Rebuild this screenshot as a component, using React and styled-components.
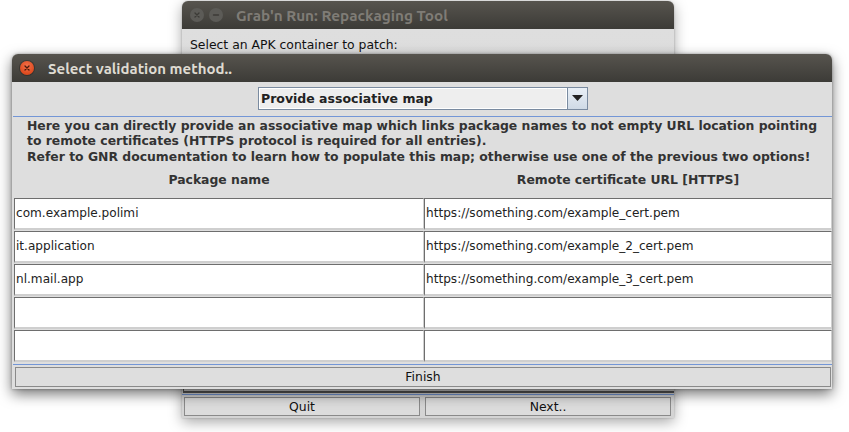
import React from "react";
import styled, { createGlobalStyle } from "styled-components";

const Global = createGlobalStyle`
  html, body { margin: 0; padding: 0; background: #ffffff; }
  body { width: 849px; height: 432px; overflow: hidden; font-family: "DejaVu Sans", sans-serif; }
`;

const Desktop = styled.div`
  position: relative;
  width: 849px;
  height: 432px;
  background: #ffffff;
  overflow: hidden;
`;

const Window = styled.div`
  position: absolute;
  left: ${(p) => p.$x}px;
  top: ${(p) => p.$y}px;
  width: ${(p) => p.$w}px;
  height: ${(p) => p.$h}px;
  display: flex;
  flex-direction: column;
  border-radius: 6px 6px 0 0;
  background: #dedede;
  box-shadow: ${(p) =>
    p.$active
      ? "0 5px 14px rgba(0,0,0,0.55), 0 0 3px rgba(0,0,0,0.35)"
      : "0 4px 14px rgba(0,0,0,0.35), 0 0 2px rgba(0,0,0,0.25)"};
`;

const TitleBar = styled.div`
  height: 28px;
  flex: none;
  display: flex;
  align-items: center;
  padding-left: 8px;
  border-radius: 6px 6px 0 0;
  background: linear-gradient(#57544e, #3c3b37);
`;

const WinButtons = styled.div`
  display: flex;
  gap: 5px;
  width: ${(p) => p.$w}px;
  flex: none;
`;

const CircleBtn = styled.div`
  width: 14px;
  height: 14px;
  border-radius: 50%;
  display: flex;
  align-items: center;
  justify-content: center;
  background: ${(p) =>
    p.$red
      ? "radial-gradient(circle at 50% 35%, #f2714b, #dd4a1e 70%, #c23c14)"
      : "#5c5b57"};
  box-shadow: ${(p) => (p.$red ? "0 0 0 1px rgba(0,0,0,0.25)" : "none")};
`;

const Title = styled.div`
  font-family: "Ubuntu", "Open Sans", sans-serif;
  font-weight: bold;
  font-size: ${(p) => (p.$active ? 15 : 15.3)}px;
  color: ${(p) => (p.$active ? "#dfdbd2" : "#7f7c76")};
  white-space: nowrap;
`;

const BackBody = styled.div`
  flex: 1;
  display: flex;
  flex-direction: column;
  background: linear-gradient(#dedede, #d4d4d4);
`;

const BackLabel = styled.div`
  font-size: 12.4px;
  color: #111;
  padding: 8px 0 0 8px;
  height: 20px;
`;

const BackPanel = styled.div`
  flex: 1;
  margin-left: 1px;
  border-left: 1px solid #555;
  border-bottom: 2px solid #555;
`;

const BlueLine = styled.div`
  height: 1px;
  flex: none;
  background: #7396d6;
  margin: ${(p) => p.$m || "0"};
`;

const BackButtons = styled.div`
  display: grid;
  grid-template-columns: 236px 246px;
  gap: 5px;
  padding: 2px 0 2px 2px;
`;

const Button = styled.div`
  height: ${(p) => p.$h || 19}px;
  box-sizing: border-box;
  border: 1px solid #8a8a8a;
  background: ${(p) => p.$bg || "#dcdcdc"};
  display: flex;
  align-items: center;
  justify-content: center;
  font-size: 12.4px;
  color: #111;
`;

const DialogBody = styled.div`
  flex: 1;
  display: flex;
  flex-direction: column;
  background: #dedede;
`;

const ComboRow = styled.div`
  display: flex;
  justify-content: center;
  padding: 5px 0 5px 2px;
`;

const Combo = styled.div`
  width: 330px;
  height: 23px;
  box-sizing: border-box;
  display: flex;
  border: 1px solid #7a8ba0;
  background: #eeeeee;
`;

const ComboText = styled.div`
  flex: 1;
  display: flex;
  align-items: center;
  padding-left: 2px;
  font-size: 12.5px;
  font-weight: bold;
  color: #222;
  border-right: 1px solid #7a8ba0;
  box-shadow: inset 0 0 0 1px #ffffff;
`;

const ComboArrow = styled.div`
  width: 19px;
  display: flex;
  align-items: center;
  justify-content: center;
  background: linear-gradient(#e9eff6, #cfdae6);
`;

const Description = styled.div`
  display: flex;
  justify-content: center;
  padding: 1px 0 0 0;
`;

const DescText = styled.div`
  font-size: 12.4px;
  font-weight: bold;
  line-height: 15.3px;
  color: #333;
  text-align: left;
  white-space: nowrap;
`;

const Table = styled.div`
  display: grid;
  grid-template-columns: 410px 408px;
  row-gap: 1px;
  margin: 8px 0 0 2px;
`;

const HeaderCell = styled.div`
  text-align: center;
  font-size: 12.4px;
  font-weight: bold;
  color: #333;
  line-height: 16px;
  height: 25px;
`;

const Cell = styled.div`
  height: 32px;
  box-sizing: border-box;
  background: #ffffff;
  border-style: solid;
  border-width: 1px 1px 2px 1px;
  border-color: #6e6e6e #cfcfcf #cfcfcf #6e6e6e;
  display: flex;
  align-items: center;
  padding-left: 1px;
  font-size: 12.1px;
  color: #222;
  white-space: nowrap;
  overflow: hidden;
`;

const FinishRow = styled.div`
  padding: 2px 1px 1px 3px;
`;

const rows = [
  ["com.example.polimi", "https://something.com/example_cert.pem"],
  ["it.application", "https://something.com/example_2_cert.pem"],
  ["nl.mail.app", "https://something.com/example_3_cert.pem"],
  ["", ""],
  ["", ""],
];

const XGlyph = ({ color }) => (
  <svg width="8" height="8" viewBox="0 0 8 8">
    <path d="M2 2 L6 6 M6 2 L2 6" stroke={color} strokeWidth="1.3" strokeLinecap="round" />
  </svg>
);

const MinusGlyph = () => (
  <svg width="8" height="8" viewBox="0 0 8 8">
    <path d="M1.5 4 H6.5" stroke="#3c3b37" strokeWidth="1.4" strokeLinecap="round" />
  </svg>
);

export default function App() {
  return (
    <>
      <Global />
      <Desktop>
        <Window $x={182} $y={1} $w={492} $h={417}>
          <TitleBar>
            <WinButtons $w={46}>
              <CircleBtn>
                <XGlyph color="#3c3b37" />
              </CircleBtn>
              <CircleBtn>
                <MinusGlyph />
              </CircleBtn>
            </WinButtons>
            <Title>Grab'n Run: Repackaging Tool</Title>
          </TitleBar>
          <BackBody>
            <BackLabel>Select an APK container to patch:</BackLabel>
            <BackPanel />
            <BlueLine $m="1px 0 0 0" />
            <BackButtons>
              <Button>Quit</Button>
              <Button>Next..</Button>
            </BackButtons>
          </BackBody>
        </Window>

        <Window $active $x={12} $y={54} $w={820} $h={335}>
          <TitleBar>
            <WinButtons $w={28}>
              <CircleBtn $red>
                <XGlyph color="#4a1a0c" />
              </CircleBtn>
            </WinButtons>
            <Title $active>Select validation method..</Title>
          </TitleBar>
          <DialogBody>
            <ComboRow>
              <Combo>
                <ComboText>Provide associative map</ComboText>
                <ComboArrow>
                  <svg width="11" height="7" viewBox="0 0 11 7">
                    <path d="M0 0 H11 L5.5 6 Z" fill="#222" />
                  </svg>
                </ComboArrow>
              </Combo>
            </ComboRow>
            <BlueLine $m="1px 0 0 1px" />
            <Description>
              <DescText>
                Here you can directly provide an associative map which links package names to not empty URL location pointing
                <br />
                to remote certificates (HTTPS protocol is required for all entries).
                <br />
                Refer to GNR documentation to learn how to populate this map; otherwise use one of the previous two options!
              </DescText>
            </Description>
            <Table>
              <HeaderCell>Package name</HeaderCell>
              <HeaderCell>Remote certificate URL [HTTPS]</HeaderCell>
              {rows.map(([a, b], i) => (
                <React.Fragment key={i}>
                  <Cell>{a}</Cell>
                  <Cell>{b}</Cell>
                </React.Fragment>
              ))}
            </Table>
            <BlueLine $m="2px 0 0 1px" />
            <FinishRow>
              <Button $h={20} $bg="#dedede">Finish</Button>
            </FinishRow>
          </DialogBody>
        </Window>
      </Desktop>
    </>
  );
}
